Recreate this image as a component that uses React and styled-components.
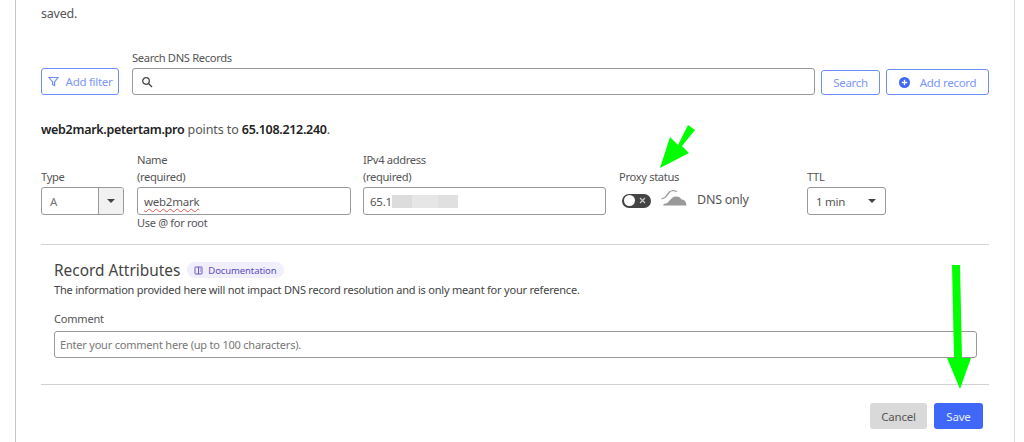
import React from 'react';
import styled, { createGlobalStyle } from 'styled-components';

const Global = createGlobalStyle`
    html, body {
        margin: 0;
        padding: 0;
        background: #fff;
        height: 442px;
        overflow: hidden;
    }
    * {
        box-sizing: border-box;
    }
`;

const Card = styled.div`
    position: relative;
    width: 1000px;
    height: 442px;
    margin-left: 15px;
    padding: 6px 25px 0 25px;
    border-left: 1.5px solid #c8c8c8;
    border-right: 1.5px solid #dcdcdc;
    font-family: "Noto Sans", sans-serif;
    font-size: 12px;
    color: #444;
    overflow: hidden;
`;

const Intro = styled.p`
    margin: 0 0 26px;
    font-size: 12.5px;
    line-height: 15px;
    height: 15px;
    letter-spacing: -0.2px;
    color: #555;
`;

const SearchRow = styled.div`
    display: flex;
    align-items: flex-end;
    gap: 6px;
    height: 48px;
`;

const OutlineButton = styled.button`
    display: flex;
    align-items: center;
    justify-content: center;
    gap: ${p => p.$gap || 0}px;
    width: ${p => p.$w}px;
    height: ${p => p.$h || 27}px;
    padding: 0;
    background: #fff;
    border: 1px solid #6f8ff8;
    border-radius: 3px;
    color: #7c97f7;
    font: 11.5px "Noto Sans", sans-serif;
    letter-spacing: -0.3px;
`;

const SearchField = styled.div`
    flex: 0 0 683px;
    margin-left: 7px;
`;

const SmallLabel = styled.div`
    font-size: 11.2px;
    line-height: 17px;
    letter-spacing: -0.35px;
    color: #555;
`;

const SearchBox = styled.div`
    display: flex;
    align-items: center;
    height: 27px;
    margin-top: 2px;
    padding-left: 8px;
    border: 1px solid #999;
    border-radius: 3px;
`;

const Points = styled.p`
    margin: 27px 0 0;
    font-size: 12.5px;
    line-height: 16px;
    letter-spacing: -0.1px;
    color: #555;

    b {
        font-weight: 600;
        letter-spacing: -0.3px;
        color: #222;
    }
`;

const FieldsRow = styled.div`
    display: grid;
    grid-template-columns: 96px 226px 256px 188px 82px;
    margin-top: 13px;
    height: 94px;
    border-bottom: 1.5px solid #d2d2d2;
`;

const Field = styled.div`
    display: flex;
    flex-direction: column;
`;

const LabelBlock = styled.div`
    display: flex;
    flex-direction: column;
    justify-content: flex-end;
    height: 34px;
    margin-bottom: 2px;
`;

const Input = styled.div`
    display: flex;
    align-items: center;
    width: ${p => p.$w}px;
    height: 28px;
    padding-left: 6px;
    border: 1px solid #999;
    border-radius: 3px;
    font-size: 11.5px;
    letter-spacing: -0.25px;
    color: #555;
`;

const Squiggle = styled.span`
    text-decoration: underline wavy #e0584f 1px;
    text-underline-offset: 2px;
`;

const Blur = styled.span`
    display: inline-block;
    width: 66px;
    height: 13px;
    background: linear-gradient(90deg, #dcdcdc 0 30%, #e6e6e6 30% 70%, #e0e0e0 70%);
`;

const Hint = styled.div`
    margin-top: 1px;
    font-size: 11px;
    line-height: 14px;
    letter-spacing: -0.3px;
    color: #555;
`;

const TypeSelect = styled.div`
    display: flex;
    width: 83px;
    height: 28px;
    border: 1px solid #999;
    border-radius: 3px;
    overflow: hidden;
    font-size: 11.5px;
    color: #777;
`;

const TypeValue = styled.div`
    flex: 1;
    display: flex;
    align-items: center;
    padding-left: 8px;
`;

const TypeCaret = styled.div`
    display: flex;
    align-items: center;
    justify-content: center;
    width: 25px;
    background: #f1f1f1;
    border-left: 1px solid #999;
`;

const Caret = styled.span`
    width: 0;
    height: 0;
    border-left: 4px solid transparent;
    border-right: 4px solid transparent;
    border-top: 4px solid #444;
`;

const ProxyRow = styled.div`
    display: flex;
    align-items: center;
    height: 28px;
    padding-left: 3px;
    margin-top: -2px;
`;

const Toggle = styled.div`
    display: flex;
    align-items: center;
    justify-content: space-between;
    width: 29px;
    height: 14px;
    padding: 0 5px 0 2px;
    margin-top: 3px;
    border-radius: 7px;
    background: #444;
`;

const Knob = styled.span`
    width: 11px;
    height: 11px;
    border-radius: 50%;
    background: #fff;
`;

const DnsOnly = styled.span`
    margin-left: 10px;
    font-size: 12.5px;
    letter-spacing: -0.25px;
    color: #555;
`;

const TtlSelect = styled.div`
    display: flex;
    align-items: center;
    justify-content: space-between;
    width: 79px;
    height: 28px;
    padding: 0 9px 0 8px;
    border: 1px solid #999;
    border-radius: 3px;
    font-size: 11.5px;
    letter-spacing: -0.25px;
    color: #555;
`;

const Attributes = styled.section`
    padding: 16px 12px 0 13px;
    height: 140px;
    border-bottom: 1.5px solid #d2d2d2;
`;

const TitleRow = styled.div`
    display: flex;
    align-items: center;
    gap: 7px;
    height: 18px;
`;

const Title = styled.h3`
    margin: 0;
    font-size: 15.4px;
    font-weight: 400;
    color: #444;
`;

const DocBadge = styled.span`
    display: flex;
    align-items: center;
    gap: 5px;
    height: 16px;
    padding: 0 7px;
    border-radius: 8px;
    background: #f2effc;
    color: #5c4bc4;
    font-size: 9.5px;
    letter-spacing: -0.1px;
`;

const AttrText = styled.p`
    margin: 3px 0 0;
    font-size: 11px;
    line-height: 15px;
    letter-spacing: -0.21px;
    color: #444;
`;

const CommentLabel = styled.div`
    margin-top: 14px;
    font-size: 11px;
    line-height: 15px;
    letter-spacing: -0.2px;
    color: #555;
`;

const CommentBox = styled.div`
    display: flex;
    align-items: center;
    height: 27px;
    margin-top: 5px;
    padding-left: 5px;
    border: 1px solid #999;
    border-radius: 3px;
    font-size: 11px;
    letter-spacing: -0.21px;
    color: #777;
`;

const Footer = styled.div`
    display: flex;
    justify-content: flex-end;
    gap: 7px;
    padding: 18px 6px 0 0;
`;

const FilledButton = styled.button`
    width: ${p => p.$w}px;
    height: 26px;
    padding: 0;
    border: 0;
    border-radius: 3px;
    background: ${p => (p.$primary ? '#3f68f6' : '#d9d9d9')};
    color: ${p => (p.$primary ? '#e6ecff' : '#555')};
    font: 11.5px "Noto Sans", sans-serif;
    letter-spacing: -0.2px;
`;

const Arrow = styled.svg`
    position: absolute;
    left: ${p => p.$x}px;
    top: ${p => p.$y}px;
    pointer-events: none;
`;

const CloudSvg = styled.svg`
    margin: -3px 0 0 10px;
`;

const FilterIcon = () => (
    <svg width="11" height="11" viewBox="0 0 11 11" fill="none" stroke="#6f8ff8" strokeWidth="1.2">
        <path d="M1 1.5h9L6.6 6v3.6L4.6 8.6V6z" />
    </svg>
);

const SearchIcon = () => (
    <svg width="12" height="12" viewBox="0 0 12 12" fill="none" stroke="#444" strokeWidth="1.3">
        <circle cx="5" cy="5" r="3.3" />
        <path d="M7.5 7.5L11 11" />
    </svg>
);

const PlusIcon = () => (
    <svg width="11" height="11" viewBox="0 0 11 11">
        <circle cx="5.5" cy="5.5" r="5.5" fill="#3f68f6" />
        <path d="M5.5 2.8v5.4M2.8 5.5h5.4" stroke="#fff" strokeWidth="1.3" />
    </svg>
);

const CloudIcon = () => (
    <CloudSvg width="26" height="17" viewBox="0 0 26 17">
        <path d="M0.5 10L4 8.5 8.5 3C9.5 2 11 1.5 12.5 1.5L16 2.5" fill="none" stroke="#999" strokeWidth="1.2" />
        <path d="M2 16.5c.5-1.5 2-2.3 4-2.3l3.5-3.6c1.3-1.8 3-3 5.4-3.2 2.6-.2 4.6 1 5.6 3.2 2.6-.2 4.8 2 5 5.9z" fill="#999" />
    </CloudSvg>
);

const XIcon = () => (
    <svg width="7" height="7" viewBox="0 0 7 7" stroke="#ccc" strokeWidth="1.2">
        <path d="M1 1l5 5M6 1L1 6" />
    </svg>
);

const BookIcon = () => (
    <svg width="9" height="9" viewBox="0 0 9 9" fill="none" stroke="#5c4bc4" strokeWidth="0.9">
        <rect x="1" y="1" width="7" height="7" rx="0.5" />
        <path d="M4.5 1v7M5.8 3h1M5.8 5h1" />
    </svg>
);

export default function App() {
    return (
        <Card>
            <Global />
            <Intro>saved.</Intro>
            <SearchRow>
                <OutlineButton $w={78} $gap={7}>
                    <FilterIcon />
                    Add filter
                </OutlineButton>
                <SearchField>
                    <SmallLabel>Search DNS Records</SmallLabel>
                    <SearchBox>
                        <SearchIcon />
                    </SearchBox>
                </SearchField>
                <OutlineButton $w={59} $h={25}>Search</OutlineButton>
                <OutlineButton $w={103} $h={26} $gap={10}>
                    <PlusIcon />
                    Add record
                </OutlineButton>
            </SearchRow>
            <Points>
                <b>web2mark.petertam.pro</b> points to <b>65.108.212.240</b>.
            </Points>
            <FieldsRow>
                <Field>
                    <LabelBlock>
                        <SmallLabel>Type</SmallLabel>
                    </LabelBlock>
                    <TypeSelect>
                        <TypeValue>A</TypeValue>
                        <TypeCaret>
                            <Caret />
                        </TypeCaret>
                    </TypeSelect>
                </Field>
                <Field>
                    <LabelBlock>
                        <SmallLabel>Name</SmallLabel>
                        <SmallLabel>(required)</SmallLabel>
                    </LabelBlock>
                    <Input $w={214}>
                        <Squiggle>web2mark</Squiggle>
                    </Input>
                    <Hint>Use @ for root</Hint>
                </Field>
                <Field>
                    <LabelBlock>
                        <SmallLabel>IPv4 address</SmallLabel>
                        <SmallLabel>(required)</SmallLabel>
                    </LabelBlock>
                    <Input $w={243}>
                        65.1
                        <Blur />
                    </Input>
                </Field>
                <Field>
                    <LabelBlock>
                        <SmallLabel>Proxy status</SmallLabel>
                    </LabelBlock>
                    <ProxyRow>
                        <Toggle>
                            <Knob />
                            <XIcon />
                        </Toggle>
                        <CloudIcon />
                        <DnsOnly>DNS only</DnsOnly>
                    </ProxyRow>
                </Field>
                <Field>
                    <LabelBlock>
                        <SmallLabel>TTL</SmallLabel>
                    </LabelBlock>
                    <TtlSelect>
                        1 min
                        <Caret />
                    </TtlSelect>
                </Field>
            </FieldsRow>
            <Attributes>
                <TitleRow>
                    <Title>Record Attributes</Title>
                    <DocBadge>
                        <BookIcon />
                        Documentation
                    </DocBadge>
                </TitleRow>
                <AttrText>
                    The information provided here will not impact DNS record resolution and is only meant for your reference.
                </AttrText>
                <CommentLabel>Comment</CommentLabel>
                <CommentBox>Enter your comment here (up to 100 characters).</CommentBox>
            </Attributes>
            <Footer>
                <FilledButton $w={57}>Cancel</FilledButton>
                <FilledButton $w={49} $primary>Save</FilledButton>
            </Footer>
            <Arrow $x={644} $y={124} width="36" height="45" viewBox="0 0 36 45">
                <path d="M0 44L10 13l8 8L28 1l7 5-13 16 7 7z" fill="#00ff00" />
            </Arrow>
            <Arrow $x={929} $y={264} width="27" height="126" viewBox="0 0 27 126">
                <path d="M7 1h8l2 93h9L15 125 2 94h7z" fill="#00ff00" />
            </Arrow>
        </Card>
    );
}
